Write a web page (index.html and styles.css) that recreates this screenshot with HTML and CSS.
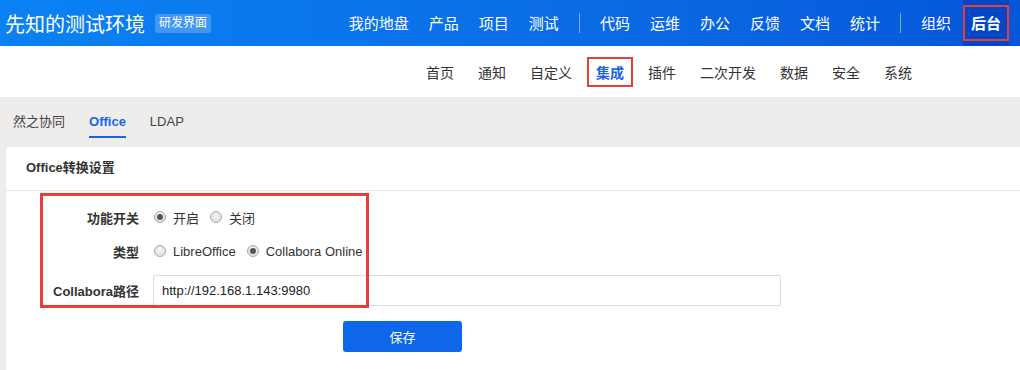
FILE: index.html
```html
<!DOCTYPE html>
<html lang="zh-CN">
<head>
  <meta charset="UTF-8">
  <title>先知的测试环境 - 后台 - 集成</title>
  <link rel="stylesheet" href="styles.css">
</head>
<body>
  <header class="topbar">
    <div class="brand">
      <span class="brand-name">先知的测试环境</span>
      <span class="brand-tag">研发界面</span>
    </div>
    <nav class="main-nav">
      <a>我的地盘</a>
      <a>产品</a>
      <a>项目</a>
      <a>测试</a>
      <span class="nav-sep"></span>
      <a>代码</a>
      <a>运维</a>
      <a>办公</a>
      <a>反馈</a>
      <a>文档</a>
      <a>统计</a>
      <span class="nav-sep"></span>
      <a>组织</a>
      <a class="active"><span class="mark">后台</span></a>
    </nav>
  </header>

  <div class="subnav">
    <a>首页</a>
    <a>通知</a>
    <a>自定义</a>
    <a class="active">集成</a>
    <a>插件</a>
    <a>二次开发</a>
    <a>数据</a>
    <a>安全</a>
    <a>系统</a>
  </div>

  <main class="content">
    <div class="tabs">
      <a>然之协同</a>
      <a class="active">Office</a>
      <a>LDAP</a>
    </div>

    <section class="panel">
      <div class="panel-head">Office转换设置</div>
      <form class="office-form">
        <div class="highlight"></div>
        <div class="row">
          <label class="row-label">功能开关</label>
          <div class="row-field">
            <span class="radio checked"></span><span class="radio-text">开启</span>
            <span class="radio"></span><span class="radio-text">关闭</span>
          </div>
        </div>
        <div class="row">
          <label class="row-label">类型</label>
          <div class="row-field">
            <span class="radio"></span><span class="radio-text">LibreOffice</span>
            <span class="radio checked"></span><span class="radio-text">Collabora Online</span>
          </div>
        </div>
        <div class="row row-input">
          <label class="row-label">Collabora路径</label>
          <div class="row-field">
            <input type="text" class="text-input" value="http://192.168.1.143:9980">
          </div>
        </div>
        <div class="actions">
          <button type="button" class="btn-save">保存</button>
        </div>
      </form>
    </section>
  </main>
</body>
</html>
```

FILE: styles.css
```css
* {
  box-sizing: border-box;
}
body {
  margin: 0;
  font-family: "Liberation Sans", "Noto Sans CJK SC", sans-serif;
  color: #333;
  background: #efedeb;
  overflow: hidden;
}
a {
  cursor: pointer;
}

/* top bar */
.topbar {
  height: 46px;
  display: flex;
  align-items: center;
  background: linear-gradient(90deg, #0a82f4 0%, #0b6fe6 50%, #0557d8 100%);
  color: #fff;
}
.brand {
  display: flex;
  align-items: center;
  padding-left: 5px;
}
.brand-name {
  font-size: 20px;
  font-family: "Noto Sans CJK SC", sans-serif;
}
.brand-tag {
  margin-left: 10px;
  padding: 0 4px;
  height: 19px;
  line-height: 19px;
  font-size: 12px;
  border-radius: 3px;
  background: rgba(255, 255, 255, 0.22);
}
.main-nav {
  margin-left: auto;
  height: 46px;
  display: flex;
  align-items: center;
  gap: 20px;
  padding-right: 19px;
}
.main-nav a {
  font-size: 15px;
  font-family: "Noto Sans CJK SC", sans-serif;
  color: #fff;
  line-height: 46px;
}
.nav-sep {
  width: 1px;
  height: 20px;
  background: rgba(255, 255, 255, 0.45);
}
.main-nav a.active {
  background: #0248c6;
  margin: 0 -8px;
  height: 46px;
  display: flex;
  align-items: center;
}
.main-nav a.active .mark {
  display: block;
  font-weight: bold;
  line-height: 32px;
  padding: 0 6px;
  border: 2px solid #ec3b3b;
}

/* second level nav */
.subnav {
  height: 51px;
  background: #fff;
  display: flex;
  align-items: center;
  gap: 24px;
  padding-left: 426px;
}
.subnav a {
  font-size: 14px;
  font-family: "Noto Sans CJK SC", sans-serif;
  color: #333;
}
.subnav a.active {
  color: #1a62e6;
  font-weight: bold;
  border: 2px solid #ec3b3b;
  padding: 2px 7px;
  margin: 0 -9px;
  line-height: 22px;
}

/* tabs */
.tabs {
  height: 50px;
  display: flex;
  align-items: center;
  gap: 24px;
  padding-left: 13px;
}
.tabs a {
  font-size: 13px;
  color: #444;
  position: relative;
  line-height: 20px;
}
.tabs a.active {
  color: #1766e6;
  font-weight: bold;
}
.tabs a.active::after {
  content: "";
  position: absolute;
  left: 0;
  right: 0;
  bottom: -6px;
  height: 2px;
  background: #1766e6;
}

/* panel */
.panel {
  margin-left: 6px;
  background: #fff;
  border-radius: 4px 0 0 0;
  height: 230px;
}
.panel-head {
  height: 44px;
  line-height: 42px;
  padding-left: 20px;
  font-size: 13px;
  font-weight: bold;
  color: #333;
  border-bottom: 1px solid #e6e6e6;
}
.office-form {
  position: relative;
  padding-top: 13px;
}
.highlight {
  position: absolute;
  left: 34px;
  top: 2px;
  width: 329px;
  height: 115px;
  border: 3px solid #ec3b3b;
  pointer-events: none;
  z-index: 2;
}
.row {
  display: flex;
  align-items: center;
  height: 26px;
  margin-bottom: 8px;
}
.row + .row {
  margin-bottom: 11px;
}
.row-label {
  width: 133px;
  text-align: right;
  font-size: 13px;
  font-weight: bold;
  color: #333;
  margin-right: 14px;
}
.row-field {
  display: flex;
  align-items: center;
  font-size: 13px;
  color: #333;
}
.radio {
  width: 12px;
  height: 12px;
  border-radius: 50%;
  border: 1px solid #a9a9a9;
  background: radial-gradient(circle at 50% 40%, #f6f6f6, #d9d9d9);
  position: relative;
  margin: 0 7px 0 1px;
}
.radio.checked::after {
  content: "";
  position: absolute;
  left: 2px;
  top: 2px;
  width: 6px;
  height: 6px;
  border-radius: 50%;
  background: #555;
}
.radio-text {
  margin-right: 10px;
}
.row.row-input {
  height: 31px;
  margin-bottom: 0;
}
.text-input {
  width: 628px;
  height: 31px;
  border: 1px solid #dcdcdc;
  border-radius: 2px;
  padding: 0 8px;
  font-family: "Liberation Sans", sans-serif;
  font-size: 13px;
  color: #222;
  outline: none;
}
.actions {
  padding-left: 337px;
  margin-top: 15px;
}
.btn-save {
  width: 119px;
  height: 31px;
  border: none;
  border-radius: 3px;
  background: #0e67e8;
  color: #fff;
  font-size: 13px;
  font-family: "Noto Sans CJK SC", sans-serif;
  cursor: pointer;
}
```
